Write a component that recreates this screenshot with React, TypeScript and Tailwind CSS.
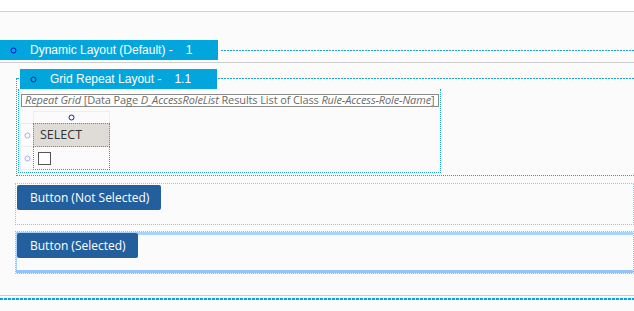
import React from "react";

const Ring = ({ color, cls }: { color: string; cls?: string }) => (
  <svg width="7" height="7" viewBox="0 0 7 7" className={cls}>
    <circle cx="3.5" cy="3.5" r="2.5" fill="none" stroke={color} strokeWidth="1" />
  </svg>
);

export default function App() {
  return (
    <div className="w-[634px] h-[311px] overflow-hidden bg-[#fbfbfb] font-['Open_Sans',sans-serif]">
      {/* top strip */}
      <div className="h-[12px] bg-white border-b border-[#cfcfcf]" />

      {/* Dynamic layout header row */}
      <div className="mt-[28px] flex items-center h-[20px]">
        <div className="w-[218px] h-[20px] bg-[#03a5dd] flex items-center text-white text-[12px] font-['Liberation_Sans',Arial,sans-serif]">
          <Ring color="#0a10c8" cls="ml-[10px]" />
          <span className="ml-[13px]">Dynamic Layout (Default) -</span>
          <span className="ml-[13px]">1</span>
        </div>
        <div className="ml-[3px] flex-1 h-px bg-[repeating-linear-gradient(90deg,#1e9fd6_0_2px,transparent_2px_3px)]" />
      </div>

      {/* gray line */}
      <div className="mt-[2px] h-px bg-[#cdcdcd]" />

      {/* Grid repeat container */}
      <div className="relative ml-[16px] mt-[15px] border-l border-b border-dotted border-[#1aa3d9] pb-[2px]">
        <div className="h-px bg-[repeating-linear-gradient(90deg,#1e9fd6_0_2px,transparent_2px_3px)]" />
        <div className="absolute top-[-9px] left-[3px] w-[197px] h-[20px] bg-[#03a5dd] flex items-center text-white text-[12px] font-['Liberation_Sans',Arial,sans-serif]">
          <Ring color="#0a10c8" cls="ml-[10px]" />
          <span className="ml-[13px]">Grid Repeat Layout -</span>
          <span className="ml-[13px]">1.1</span>
        </div>

        {/* inner container */}
        <div className="ml-[1px] mt-[10px] pt-[5px] pb-[2px] w-[423px] border-l border-r border-b border-dotted border-[#1aa3d9]">
          <div className="ml-[2px] w-[418px] h-[13px] border border-[#8a8a8a] bg-white text-[11px] leading-[9px] text-[#6a6a6a] whitespace-nowrap pl-[3px] tracking-[-0.12px]">
            <i>Repeat Grid</i> [Data Page <i>D_AccessRoleList</i> Results List of Class <i>Rule-Access-Role-Name</i>]
          </div>

          {/* grid table */}
          <div className="ml-[1px] mt-[4px] grid grid-cols-[13px_77px] grid-rows-[12px_24px_23px]">
            <div />
            <div className="border border-[#eeeeee] border-b-0 flex justify-center items-center">
              <Ring color="#1414d8" />
            </div>
            <div className="border border-[#ececec] border-r-0 flex items-center justify-center">
              <Ring color="#b0aaf0" />
            </div>
            <div className="bg-[#dfdcd7] border border-dotted border-[#1aa3d9] flex items-center pl-[6px] text-[12.5px] text-[#333]">
              SELECT
            </div>
            <div className="border border-[#ececec] border-t-0 border-r-0 flex items-center justify-center">
              <Ring color="#b0aaf0" />
            </div>
            <div className="border border-t-0 border-dotted border-[#1aa3d9] flex items-center pl-[4px]">
              <div className="w-[13px] h-[13px] border border-[#555] bg-white" />
            </div>
          </div>
        </div>
      </div>

      {/* Button not selected */}
      <div className="ml-[15px] mt-[7px] h-[42px] border border-dotted border-[#9cc2ee] p-px">
        <div className="w-[144px] h-[25px] bg-[#245f9d] rounded-[2px] flex items-center pl-[13px] text-white text-[12px]">
          Button (Not Selected)
        </div>
      </div>

      {/* Button selected */}
      <div className="ml-[15px] mt-[6px] h-[43px] border border-dotted border-[#8fbcf0] p-px shadow-[inset_0_3px_0_#a9d3fc,inset_0_-3px_0_#93c3f8,inset_1px_0_0_#a9d3fc]">
        <div className="w-[121px] h-[25px] bg-[#245f9d] rounded-[2px] flex items-center pl-[13px] text-white text-[12px]">
          Button (Selected)
        </div>
      </div>

      <div className="mt-[21px] h-px bg-[#cdcdcd]" />
      <div className="mt-[2px] h-[2px] bg-[repeating-linear-gradient(90deg,#0aa3e0_0_3px,transparent_3px_4px)]" />
    </div>
  );
}
